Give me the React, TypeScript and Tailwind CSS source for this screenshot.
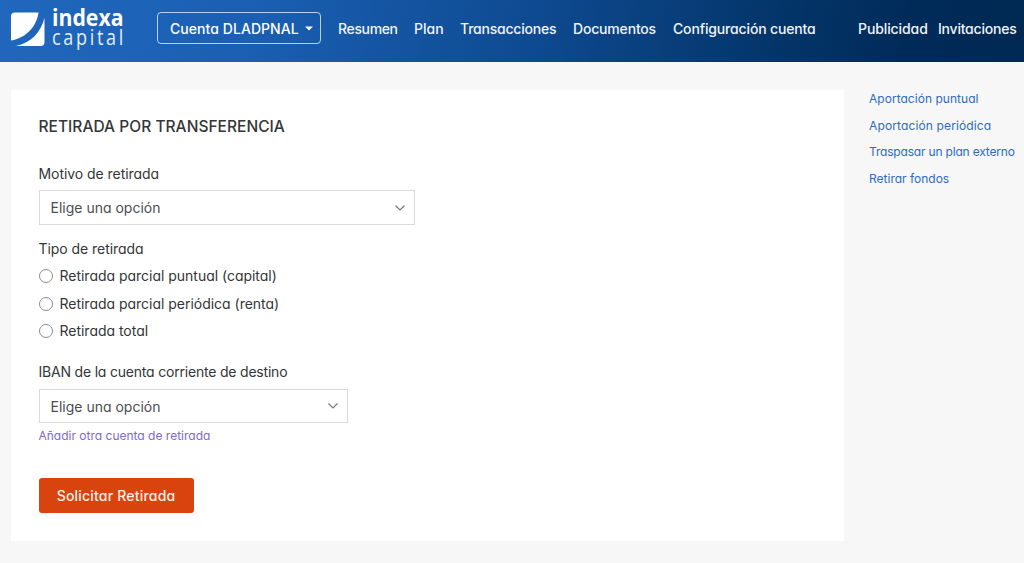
import type { ReactNode } from "react";

const navLinks = [
  { label: "Resumen", cls: "w-[76px] tracking-[-0.35px]" },
  { label: "Plan", cls: "w-[46px]" },
  { label: "Transacciones", cls: "w-[113px] tracking-[-0.22px]" },
  { label: "Documentos", cls: "w-[100px] tracking-[-0.18px]" },
  { label: "Configuración cuenta", cls: "w-[185px] tracking-[-0.15px]" },
  { label: "Publicidad", cls: "w-[80px] tracking-[-0.1px]" },
  { label: "Invitaciones", cls: "w-[86px] tracking-[-0.22px]" },
];

const sideLinks = [
  { label: "Aportación puntual", cls: "tracking-[0.03px]" },
  { label: "Aportación periódica", cls: "tracking-[0.13px]" },
  { label: "Traspasar un plan externo", cls: "tracking-[-0.18px]" },
  { label: "Retirar fondos", cls: "" },
];

const withdrawalTypes = ["Retirada parcial puntual (capital)", "Retirada parcial periódica (renta)", "Retirada total"];

function Logo() {
  return (
    <svg width="114" height="58" viewBox="0 0 114 58" className="shrink-0" aria-label="indexa capital">
      <path d="M4 12.500H27.500C26 25 16 38 0 40.500V16.500Q0 12.500 4 12.500Z" fill="#fff" />
      <path d="M33.500 18V42Q33.500 46 29.500 46H5C20 43 30 32 33.500 18Z" fill="#fff" />
      <text x="41" y="25.500" textLength="71.500" lengthAdjust="spacingAndGlyphs" fill="#fff" fontFamily="'Open Sans', 'Noto Sans', sans-serif" fontWeight="700" fontSize="22.500">indexa</text>
      <text transform="translate(41 45) scale(.86 1)" textLength="83" fill="#e4eefb" fontFamily="'Open Sans', 'Noto Sans', sans-serif" fontWeight="400" fontSize="21">capital</text>
    </svg>
  );
}

function Select({ className, children }: { className: string; children: ReactNode }) {
  return (
    <button type="button" className={`flex items-center justify-between border border-[#d9dadb] bg-white pr-[8px] pl-[11px] text-[14px] text-[#4c4e51] ${className}`}>
      <span>{children}</span>
      <svg width="12" height="8" viewBox="0 0 12 8" fill="none" stroke="#77797c" strokeWidth="1.200">
        <path d="M1.500 1.500L6 6L10.500 1.500" />
      </svg>
    </button>
  );
}

export default function App() {
  return (
    <div className="flex h-[563px] w-[1024px] flex-col overflow-hidden bg-[#f7f7f7] font-['Inter',sans-serif] text-[14px] text-[#343638] [font-feature-settings:'cv11']">
      <header className="flex h-[62px] shrink-0 bg-[linear-gradient(100deg,#2067bd_0%,#1a5fb2_25%,#0e4a91_52%,#05386f_72%,#002b59_88%,#002852_100%)] text-white">
        <div className="w-[157px] pl-[11px]">
          <Logo />
        </div>
        <button type="button" className="mt-[12px] flex h-[32px] w-[164px] items-center justify-between rounded-[4px] border border-[#b9cfec] pr-[7px] pl-[12px] font-medium">
          <span className="whitespace-nowrap tracking-[0.06px]">Cuenta DLADPNAL</span>
          <svg width="8" height="5" viewBox="0 0 8 5" fill="currentColor">
            <path d="M0 .4H8L4 4.400Z" />
          </svg>
        </button>
        <nav className="ml-[17px] flex h-[57px] items-center font-medium text-[#f0f4fa]">
          {navLinks.map((link) => (
            <a key={link.label} className={`shrink-0 whitespace-nowrap ${link.cls}`}>{link.label}</a>
          ))}
        </nav>
      </header>

      <div className="flex pt-[28px] pl-[11px]">
        <main className="flex h-[451px] w-[833px] shrink-0 flex-col items-start bg-white pt-[27px] pl-[27.500px]">
          <h1 className="text-[15.500px] leading-[20px] font-medium tracking-[0.03px]">RETIRADA POR TRANSFERENCIA</h1>
          <label className="mt-[27px] leading-[20px] tracking-[-0.05px]">Motivo de retirada</label>
          <Select className="mt-[6px] h-[35px] w-[376.500px]">Elige una opción</Select>
          <div className="mt-[14px] leading-[20px] tracking-[-0.05px]">Tipo de retirada</div>
          <div className="mt-[3.500px] flex flex-col">
            {withdrawalTypes.map((type) => (
              <label key={type} className="flex h-[27.500px] items-center gap-[7px] leading-[20px] tracking-[-0.02px]">
                <span className="size-[14px] rounded-full border border-[#8c8d8f] bg-white" />
                {type}
              </label>
            ))}
          </div>
          <label className="mt-[17px] leading-[20px] tracking-[-0.2px]">IBAN de la cuenta corriente de destino</label>
          <Select className="mt-[7px] h-[34px] w-[309.500px]">Elige una opción</Select>
          <a className="mt-[4px] text-[12px] leading-[18px] text-[#7e69cd]">Añadir otra cuenta de retirada</a>
          <button type="button" className="mt-[33px] h-[35px] w-[155px] rounded-[3px] bg-[#d9440e] font-medium tracking-[0.2px] text-[#fff0e8]">Solicitar Retirada</button>
        </main>
        <aside className="flex flex-col pl-[25px] text-[12px] text-[#2e6bc0]">
          {sideLinks.map((link) => (
            <a key={link.label} className={`flex h-[26.500px] items-start leading-[18px] whitespace-nowrap ${link.cls}`}>{link.label}</a>
          ))}
        </aside>
      </div>
    </div>
  );
}
